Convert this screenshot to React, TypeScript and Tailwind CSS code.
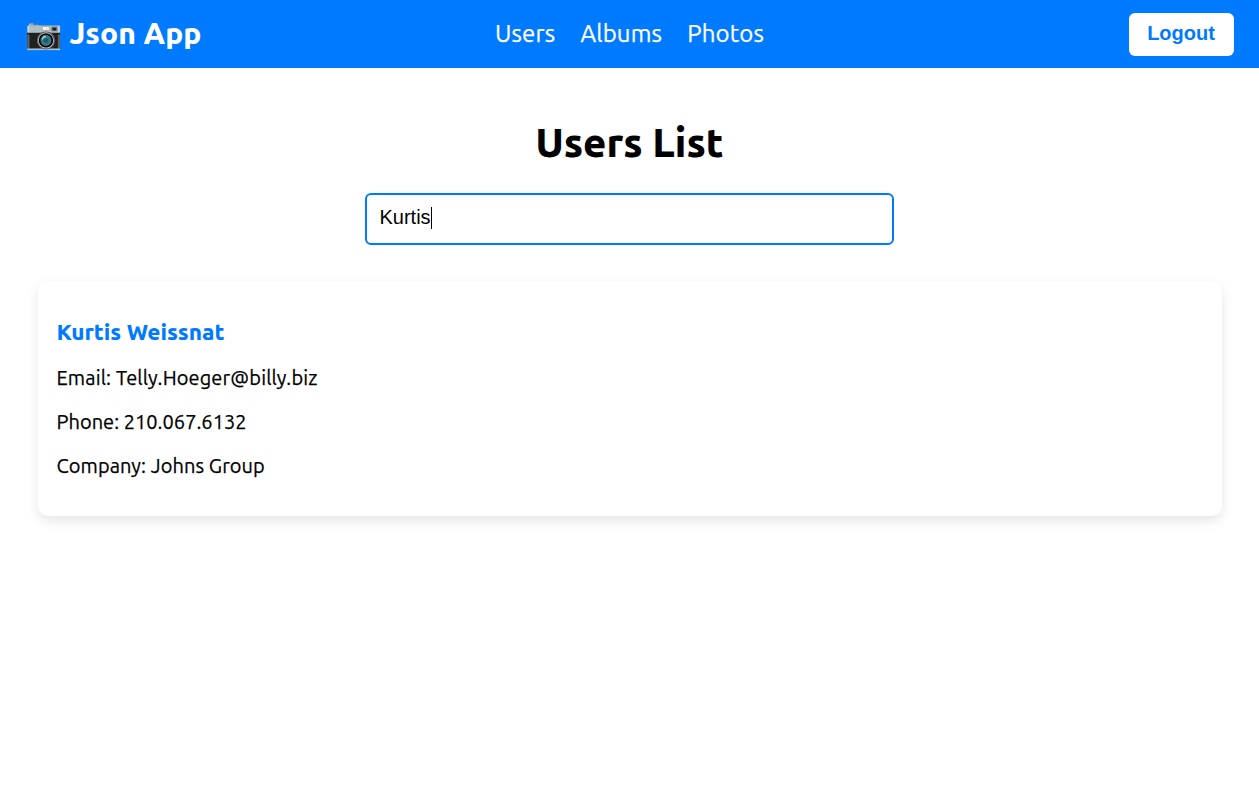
const user = {
  name: "Kurtis Weissnat",
  email: "Telly.Hoeger@billy.biz",
  phone: "210.067.6132",
  company: "Johns Group",
};

const links = ["Users", "Albums", "Photos"];

function Header() {
  return (
    <header className="grid h-[68px] grid-cols-[1fr_auto_1fr] items-center bg-[#007bff] px-[25px] text-white">
      <div className="pb-0.5 text-[30px] leading-[36px] font-extrabold tracking-[0.1px]">📷 Json App</div>
      <nav className="flex gap-[25.3px] text-[24px] leading-[36px] tracking-[0.12px] [-webkit-text-stroke:0.25px_currentColor]">
        {links.map((l) => (
          <a key={l} href="#">{l}</a>
        ))}
      </nav>
      <button className="h-[43px] w-[105px] justify-self-end rounded-[6px] bg-white pr-px pb-0.5 font-['Liberation_Sans',sans-serif] text-[20px] font-bold text-[#007bff]">
        Logout
      </button>
    </header>
  );
}

export default function App() {
  return (
    <div className="min-h-screen bg-white font-[Ubuntu,'Noto_Sans',sans-serif] text-black">
      <Header />
      <main className="px-[38px] pt-[50px]">
        <h1 className="text-center text-[40px] leading-[50px] font-extrabold">Users List</h1>
        <div
          role="textbox"
          className="mx-auto mt-[25px] flex h-[52px] w-[529px] items-center rounded-[6px] border-2 border-[#007bff] px-[12.5px] pb-[2px] font-['Liberation_Sans',sans-serif] text-[20px]"
        >
          <span className="pb-0.5">Kurtis</span>
          <span className="h-[22px] w-px bg-black" />
        </div>
        <section className="mt-[36px] h-[235px] w-[1184px] rounded-[10px] bg-white px-[18.5px] pt-[36px] shadow-[0_5px_12px_rgba(0,0,0,0.1)]">
          <h3 className="text-[22.5px] leading-[30px] font-extrabold text-[#007bff]">{user.name}</h3>
          <div className="mt-[19px] flex flex-col gap-[20px] text-[20px] leading-[24px] [-webkit-text-stroke:0.25px_currentColor]">
            <p className="tracking-[0.14px]">Email: {user.email}</p>
            <p className="tracking-[0.02px]">Phone: {user.phone}</p>
            <p className="tracking-[0.07px]">Company: {user.company}</p>
          </div>
        </section>
      </main>
    </div>
  );
}
